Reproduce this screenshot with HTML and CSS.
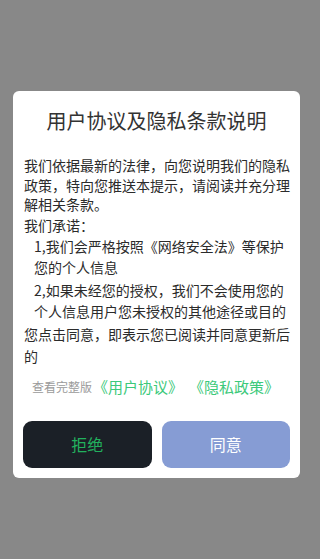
FILE: index.html
```html
<!DOCTYPE html>
<html lang="zh-CN">
<head>
<meta charset="utf-8">
<meta name="viewport" content="width=device-width, initial-scale=1">
<title>用户协议及隐私条款说明</title>
<link rel="stylesheet" href="styles.css">
</head>
<body>
<div class="overlay">
  <div class="dialog">
    <h1 class="title">用户协议及隐私条款说明</h1>
    <div class="content">
      <p class="intro">我们依据最新的法律，向您说明我们的隐私<br>政策，特向您推送本提示，请阅读并充分理<br>解相关条款。</p>
      <p class="promise">我们承诺：</p>
      <p class="item item-1">1,我们会严格按照《网络安全法》等保护<br>您的个人信息</p>
      <p class="item item-2">2,如果未经您的授权，我们不会使用您的<br>个人信息用户您未授权的其他途径或目的</p>
      <p class="agree">您点击同意，即表示您已阅读并同意更新后<br>的</p>
    </div>
    <div class="links">
      <span class="links-label">查看完整版</span>
      <a class="link">《用户协议》</a><a class="link link-second">《隐私政策》</a>
    </div>
    <div class="actions">
      <button class="btn btn-reject">拒绝</button>
      <button class="btn btn-agree">同意</button>
    </div>
  </div>
</div>
</body>
</html>
```

FILE: styles.css
```css
html, body {
  margin: 0;
  padding: 0;
}
body {
  background: #888888;
  font-family: "Noto Sans CJK SC", "Noto Sans", sans-serif;
  width: 320px;
  height: 559px;
  overflow: hidden;
}
.overlay {
  padding-top: 91px;
  padding-left: 13px;
}
.dialog {
  width: 287px;
  background: #ffffff;
  border-radius: 6px;
  padding: 16px 0 10px;
  box-sizing: border-box;
}
.title {
  margin: 0;
  font-size: 20px;
  line-height: 28px;
  font-weight: normal;
  color: #333333;
  text-align: center;
}
.content {
  margin-top: 21px;
  padding: 0 6px 0 11px;
  color: #2b2b2b;
  font-size: 14px;
  white-space: nowrap;
}
.content p {
  margin: 0;
}
.intro {
  line-height: 19.5px;
}
.promise {
  line-height: 20px;
}
.item {
  padding-left: 10px;
}
.item-1 {
  margin-top: 1px !important;
  line-height: 21px;
}
.item-2 {
  margin-top: 2px !important;
  line-height: 21.5px;
}
.agree {
  line-height: 22px;
}
.links {
  display: flex;
  align-items: center;
  margin-top: 10px;
  padding-left: 19px;
  height: 20px;
  white-space: nowrap;
}
.links-label {
  font-size: 12px;
  color: #9a9a9a;
}
.link {
  font-size: 15px;
  color: #3cc97a;
  text-decoration: none;
  margin-left: 1px;
}
.link-second {
  margin-left: 6px;
}
.actions {
  display: flex;
  gap: 10px;
  margin-top: 24px;
  padding: 0 10px;
}
.btn {
  flex: 1;
  height: 47px;
  border: none;
  border-radius: 9px;
  font-family: inherit;
  font-size: 16px;
  padding: 0;
}
.btn-reject {
  background: #1b2027;
  color: #22b15e;
}
.btn-agree {
  background: #869cd4;
  color: #ffffff;
}
```
